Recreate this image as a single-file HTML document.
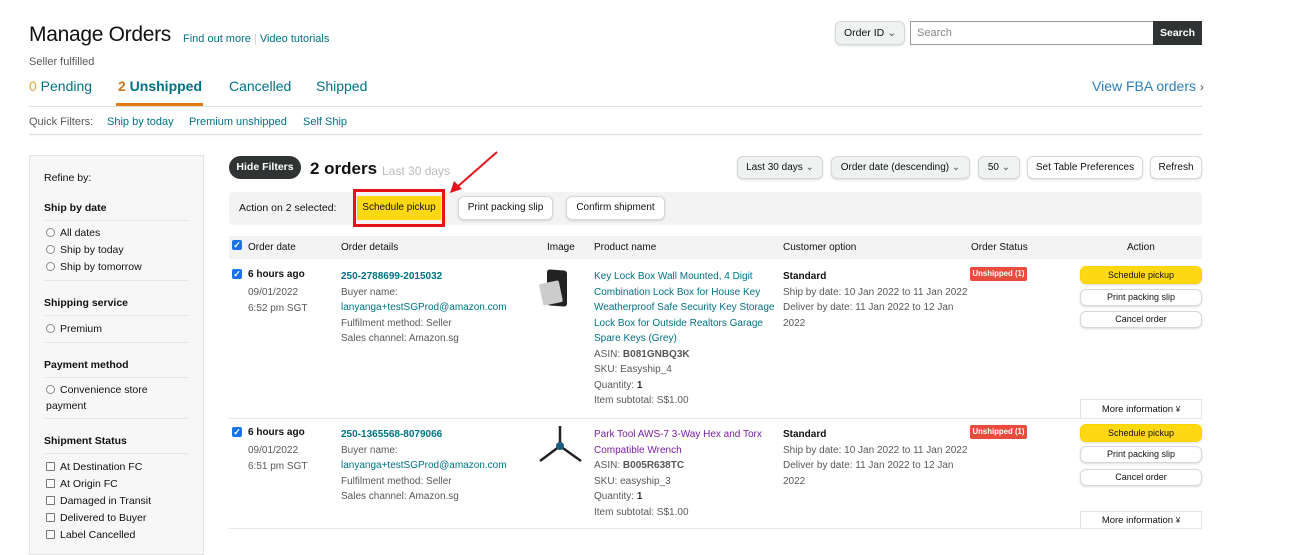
<!DOCTYPE html>
<html><head><meta charset="utf-8"><style>
*{margin:0;padding:0;box-sizing:border-box}
body{width:1308px;height:549px;overflow:hidden;background:#fff;font-family:"Liberation Sans",sans-serif;color:#0f1111;position:relative}
.a{position:absolute;white-space:nowrap}
.t{color:#007185}
.g{color:#565959}
.s{font-size:10px}
.btn{position:absolute;border:1px solid #d5d9d9;border-radius:6px;background:#fff;font-size:10px;text-align:center;box-shadow:0 1px 2px rgba(15,17,17,.15)}
.dd{background:#f0f2f2}
.y{background:#ffd814;border-color:#fcd200}
.chk{position:absolute;width:10px;height:10px;background:#1a73e8;border-radius:2px;color:#fff;font-size:9px;line-height:10px;text-align:center;font-weight:bold}
.rad{display:inline-block;width:9px;height:9px;border:1px solid #888;border-radius:50%;vertical-align:-1px;margin-right:5px;background:#fff}
.box{display:inline-block;width:9px;height:9px;border:1px solid #777;border-radius:1px;vertical-align:-1px;margin-right:5px;background:#fff}
.hr{position:absolute;height:1px;background:#e7e7e7}
.sb div{font-size:10.5px}
.badge{position:absolute;width:57px;height:14px;background:#e74c3c;color:#fff;font-size:7.8px;font-weight:bold;text-align:center;line-height:14px;border-radius:2px}
</style></head><body>
<div class="a" style="left:29px;top:23px;font-size:21px;color:#0f1111;letter-spacing:-0.3px">Manage Orders</div>
<div class="a t" style="left:183px;top:33px;font-size:11px">Find out more <span style="color:#ccc">|</span> Video tutorials</div>
<div class="a g" style="left:29px;top:56px;font-size:11px">Seller fulfilled</div>
<div class="a" style="left:29px;top:78px;font-size:14px;color:#007185"><span style="color:#e3a33b">0</span> Pending</div>
<div class="a" style="left:118px;top:78px;font-size:14px;font-weight:bold;color:#007185"><span style="color:#c7791d">2</span> Unshipped</div>
<div class="a" style="left:116px;top:103px;width:87px;height:3px;background:#e47911"></div>
<div class="a t" style="left:229px;top:78px;font-size:14px">Cancelled</div>
<div class="a t" style="left:316px;top:78px;font-size:14px">Shipped</div>
<div class="a" style="left:1092px;top:78px;font-size:14px;color:#2d7fba">View FBA orders <span style="color:#555;font-size:12px">›</span></div>
<div class="hr" style="left:29px;top:106px;width:1173px;background:#ddd"></div>
<div class="a g" style="left:29px;top:116px;font-size:11px">Quick Filters:</div>
<div class="a t" style="left:107px;top:116px;font-size:11px">Ship by today</div>
<div class="a t" style="left:189px;top:116px;font-size:11px">Premium unshipped</div>
<div class="a t" style="left:303px;top:116px;font-size:11px">Self Ship</div>
<div class="hr" style="left:29px;top:134px;width:1173px;background:#ddd;box-shadow:0 1px 3px rgba(0,0,0,.08)"></div>

<div class="btn dd" style="left:835px;top:21px;width:70px;height:24px;line-height:22px;font-size:10.5px">Order ID <span style="color:#555">⌄</span></div>
<div class="a" style="left:910px;top:21px;width:244px;height:24px;border:1px solid #999;border-right:none;font-size:11px;color:#888;padding:5px 6px">Search</div>
<div class="a" style="left:1153px;top:21px;width:49px;height:24px;background:#303333;color:#fff;font-size:10.5px;font-weight:bold;text-align:center;line-height:24px">Search</div>

<div class="a sb" style="left:29px;top:155px;width:175px;height:400px;background:#f7f7f7;border:1px solid #e3e3e3">
 <div class="a" style="left:14px;top:16px">Refine by:</div>
 <div class="a" style="left:14px;top:46px;font-weight:bold">Ship by date</div>
 <div class="hr" style="left:14px;top:64px;width:145px"></div>
 <div class="a" style="left:16px;top:71px"><span class="rad"></span>All dates</div>
 <div class="a" style="left:16px;top:88px"><span class="rad"></span>Ship by today</div>
 <div class="a" style="left:16px;top:105px"><span class="rad"></span>Ship by tomorrow</div>
 <div class="hr" style="left:14px;top:124px;width:145px"></div>
 <div class="a" style="left:14px;top:141px;font-weight:bold">Shipping service</div>
 <div class="hr" style="left:14px;top:159px;width:145px"></div>
 <div class="a" style="left:16px;top:167px"><span class="rad"></span>Premium</div>
 <div class="hr" style="left:14px;top:186px;width:145px"></div>
 <div class="a" style="left:14px;top:203px;font-weight:bold">Payment method</div>
 <div class="hr" style="left:14px;top:221px;width:145px"></div>
 <div class="a" style="left:16px;top:228px"><span class="rad"></span>Convenience store</div>
 <div class="a" style="left:16px;top:244px">payment</div>
 <div class="hr" style="left:14px;top:262px;width:145px"></div>
 <div class="a" style="left:14px;top:279px;font-weight:bold">Shipment Status</div>
 <div class="hr" style="left:14px;top:297px;width:145px"></div>
 <div class="a" style="left:16px;top:305px"><span class="box"></span>At Destination FC</div>
 <div class="a" style="left:16px;top:322px"><span class="box"></span>At Origin FC</div>
 <div class="a" style="left:16px;top:339px"><span class="box"></span>Damaged in Transit</div>
 <div class="a" style="left:16px;top:356px"><span class="box"></span>Delivered to Buyer</div>
 <div class="a" style="left:16px;top:373px"><span class="box"></span>Label Cancelled</div>
</div>

<div class="a" style="left:229px;top:156px;width:72px;height:23px;border-radius:12px;background:#303333;color:#fff;font-size:10.5px;font-weight:bold;text-align:center;line-height:23px">Hide Filters</div>
<div class="a" style="left:310px;top:159px;font-size:17px;font-weight:bold">2 orders</div>
<div class="a" style="left:382px;top:164px;font-size:12px;color:#bbb">Last 30 days</div>
<div class="btn dd" style="left:737px;top:156px;width:86px;height:23px;line-height:21px">Last 30 days <span style="color:#555">⌄</span></div>
<div class="btn dd" style="left:831px;top:156px;width:139px;height:23px;line-height:21px">Order date (descending) <span style="color:#555">⌄</span></div>
<div class="btn dd" style="left:978px;top:156px;width:42px;height:23px;line-height:21px">50 <span style="color:#555">⌄</span></div>
<div class="btn" style="left:1027px;top:156px;width:116px;height:23px;line-height:21px">Set Table Preferences</div>
<div class="btn" style="left:1150px;top:156px;width:52px;height:23px;line-height:21px">Refresh</div>

<div class="a" style="left:229px;top:192px;width:973px;height:33px;background:#f3f3f3;border-radius:4px"></div>
<div class="a" style="left:239px;top:202px;font-size:10.5px">Action on 2 selected:</div>
<div class="a" style="left:357px;top:196px;width:84px;height:24px;background:#ffd814;font-size:10px;text-align:center;line-height:24px">Schedule pickup</div>
<div class="a" style="left:353px;top:189px;width:92px;height:38px;border:3px solid #e8121a"></div>
<div class="btn" style="left:458px;top:196px;width:95px;height:24px;line-height:22px">Print packing slip</div>
<div class="btn" style="left:566px;top:196px;width:99px;height:24px;line-height:22px">Confirm shipment</div>
<svg class="a" style="left:445px;top:148px" width="60" height="50"><line x1="52" y1="4" x2="11" y2="40" stroke="#e8121a" stroke-width="2"/><polygon points="5,45 9,33 17,41" fill="#e8121a"/></svg>

<div class="a" style="left:229px;top:236px;width:973px;height:23px;background:#f3f3f3"></div>
<div class="chk" style="left:232px;top:240px">✓</div>
<div class="a s" style="left:248px;top:242px">Order date</div>
<div class="a s" style="left:341px;top:242px">Order details</div>
<div class="a s" style="left:547px;top:242px">Image</div>
<div class="a s" style="left:594px;top:242px">Product name</div>
<div class="a s" style="left:783px;top:242px">Customer option</div>
<div class="a s" style="left:971px;top:242px">Order Status</div>
<div class="a s" style="left:1127px;top:242px">Action</div>

<div class="chk" style="left:232px;top:269px">✓</div>
<div class="a s" style="left:248px;top:269px;font-weight:bold">6 hours ago</div>
<div class="a s g" style="left:248px;top:285px;line-height:15.5px">09/01/2022<br>6:52 pm SGT</div>
<div class="a s" style="left:341px;top:269px;line-height:15.5px"><b class="t">250-2788699-2015032</b><br><span class="g">Buyer name:</span><br><span class="t">lanyanga+testSGProd@amazon.com</span><br><span class="g">Fulfilment method: Seller</span><br><span class="g">Sales channel: Amazon.sg</span></div>
<div class="a" style="left:547px;top:270px;width:20px;height:36px;background:#222;border-radius:3px;transform:skewY(4deg)"></div>
<div class="a" style="left:541px;top:282px;width:20px;height:22px;background:#ccc;border-radius:2px;transform:rotate(-12deg)"></div>
<div class="a s" style="left:594px;top:269px;line-height:15.5px"><span class="t">Key Lock Box Wall Mounted, 4 Digit<br>Combination Lock Box for House Key<br>Weatherproof Safe Security Key Storage<br>Lock Box for Outside Realtors Garage<br>Spare Keys (Grey)</span><br><span class="g">ASIN: <b>B081GNBQ3K</b><br>SKU: Easyship_4<br>Quantity: <b style="color:#333">1</b><br>Item subtotal: S$1.00</span></div>
<div class="a s" style="left:783px;top:269px;line-height:15.5px"><b>Standard</b><br><span class="g">Ship by date: 10 Jan 2022 to 11 Jan 2022<br>Deliver by date: 11 Jan 2022 to 12 Jan<br>2022</span></div>
<div class="badge" style="left:970px;top:267px">Unshipped (1)</div>
<div class="btn y" style="left:1080px;top:266px;width:122px;height:18px;line-height:16px;font-size:9px">Schedule pickup</div>
<div class="btn" style="left:1080px;top:289px;width:122px;height:17px;line-height:15px;font-size:9px">Print packing slip</div>
<div class="btn" style="left:1080px;top:311px;width:122px;height:17px;line-height:15px;font-size:9px">Cancel order</div>
<div class="a" style="left:1080px;top:399px;width:122px;height:19px;border:1px solid #e3e3e3;border-bottom:none;font-size:9.5px;text-align:center;line-height:19px">More information <span style="font-size:8px">¥</span></div>
<div class="hr" style="left:229px;top:418px;width:973px"></div>

<div class="chk" style="left:232px;top:427px">✓</div>
<div class="a s" style="left:248px;top:427px;font-weight:bold">6 hours ago</div>
<div class="a s g" style="left:248px;top:443px;line-height:15.5px">09/01/2022<br>6:51 pm SGT</div>
<div class="a s" style="left:341px;top:427px;line-height:15.5px"><b class="t">250-1365568-8079066</b><br><span class="g">Buyer name:</span><br><span class="t">lanyanga+testSGProd@amazon.com</span><br><span class="g">Fulfilment method: Seller</span><br><span class="g">Sales channel: Amazon.sg</span></div>
<svg class="a" style="left:537px;top:424px" width="46" height="40"><line x1="23" y1="2" x2="23" y2="22" stroke="#222" stroke-width="2.5"/><line x1="23" y1="22" x2="3" y2="37" stroke="#222" stroke-width="2.5"/><line x1="23" y1="22" x2="44" y2="37" stroke="#222" stroke-width="2.5"/><circle cx="23" cy="22" r="4" fill="#1c5b7a"/></svg>
<div class="a s" style="left:594px;top:427px;line-height:15.5px"><span style="color:#7b1fa2">Park Tool AWS-7 3-Way Hex and Torx<br>Compatible Wrench</span><br><span class="g">ASIN: <b>B005R638TC</b><br>SKU: easyship_3<br>Quantity: <b style="color:#333">1</b><br>Item subtotal: S$1.00</span></div>
<div class="a s" style="left:783px;top:427px;line-height:15.5px"><b>Standard</b><br><span class="g">Ship by date: 10 Jan 2022 to 11 Jan 2022<br>Deliver by date: 11 Jan 2022 to 12 Jan<br>2022</span></div>
<div class="badge" style="left:970px;top:425px">Unshipped (1)</div>
<div class="btn y" style="left:1080px;top:424px;width:122px;height:18px;line-height:16px;font-size:9px">Schedule pickup</div>
<div class="btn" style="left:1080px;top:446px;width:122px;height:17px;line-height:15px;font-size:9px">Print packing slip</div>
<div class="btn" style="left:1080px;top:469px;width:122px;height:17px;line-height:15px;font-size:9px">Cancel order</div>
<div class="a" style="left:1080px;top:511px;width:122px;height:18px;border:1px solid #e3e3e3;border-bottom:none;font-size:9.5px;text-align:center;line-height:18px">More information <span style="font-size:8px">¥</span></div>
<div class="hr" style="left:229px;top:528px;width:973px"></div>
</body></html>
